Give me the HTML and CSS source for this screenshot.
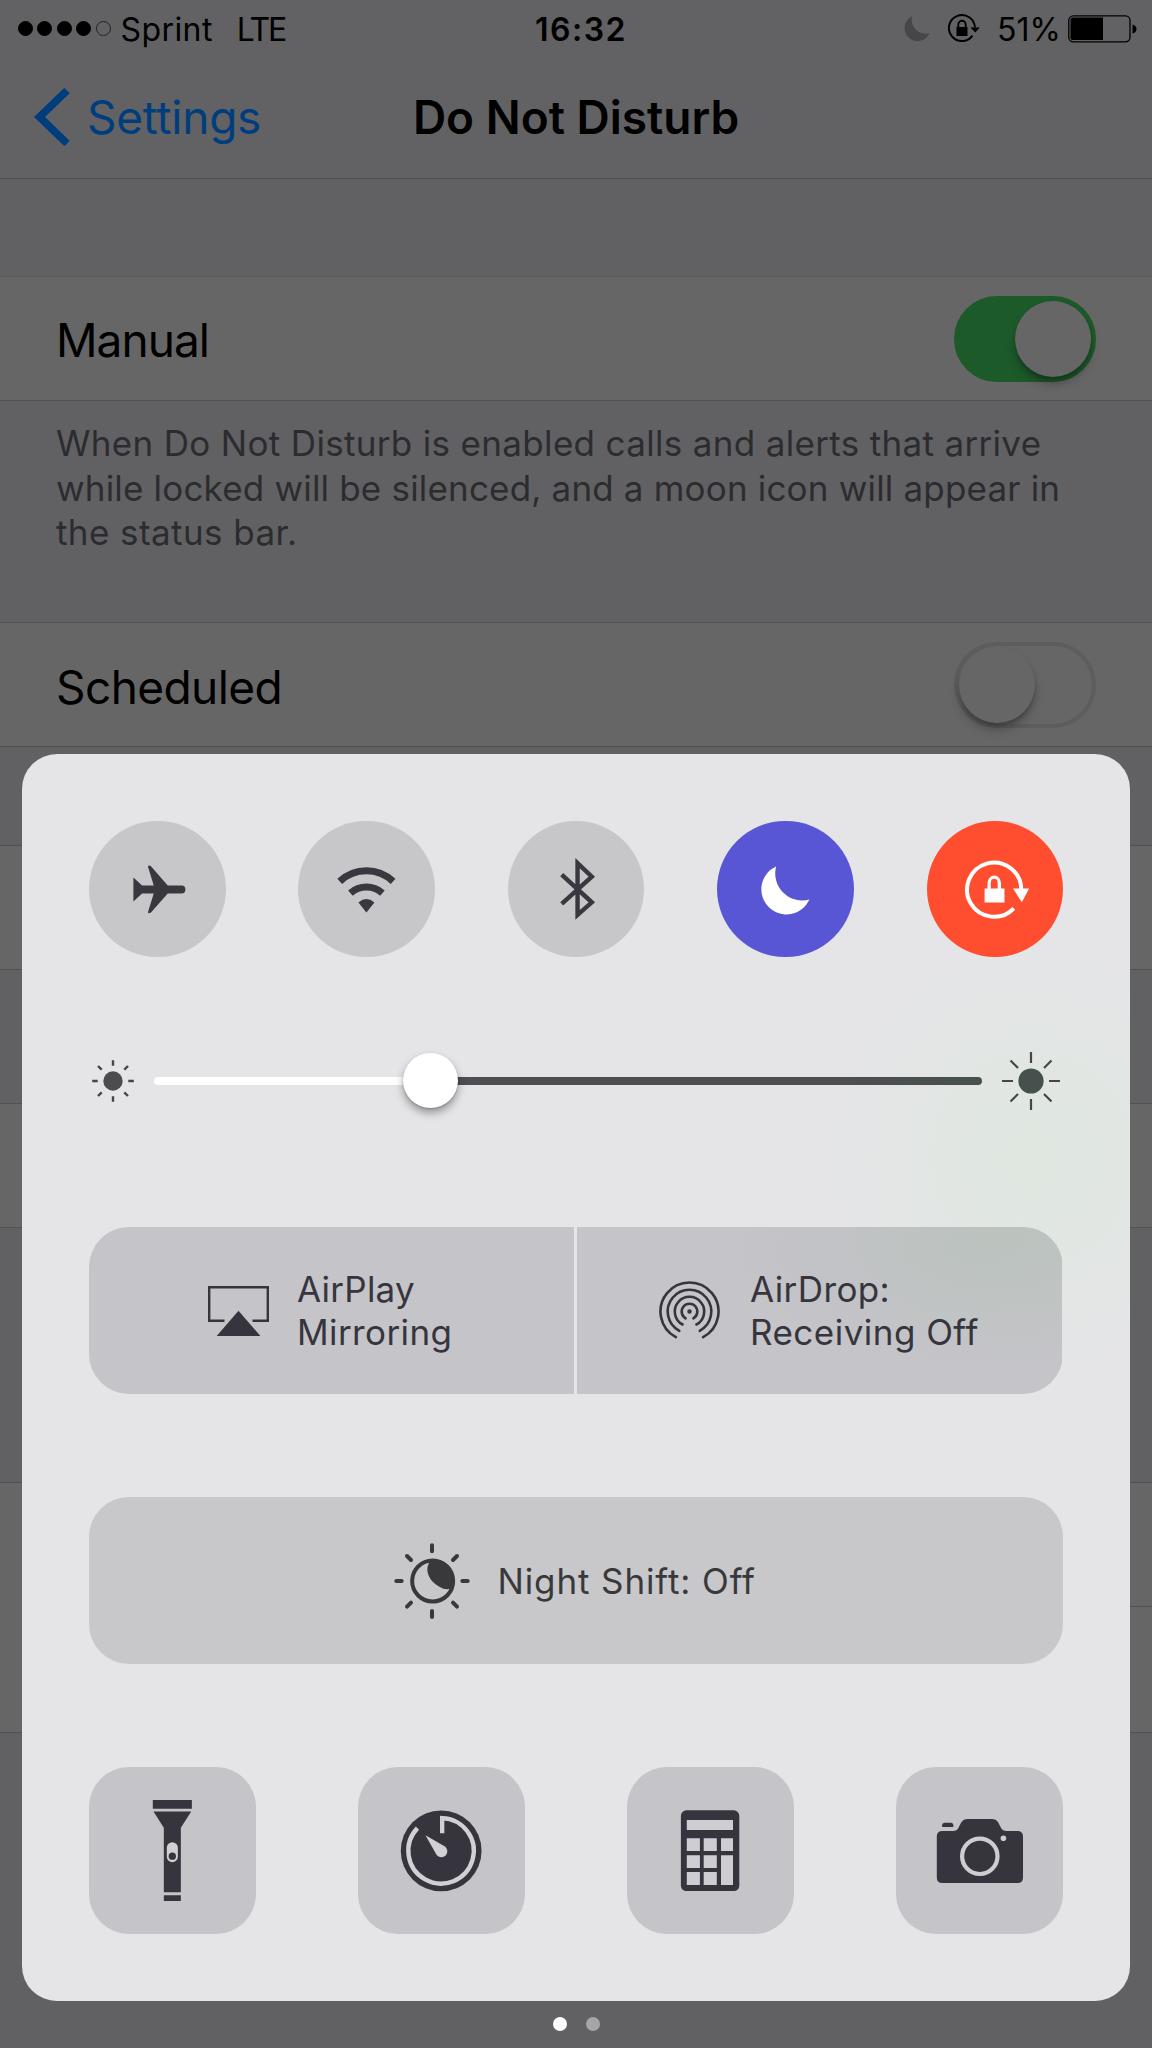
FILE: index.html
```html
<!DOCTYPE html>
<html lang="en">
<head>
<meta charset="utf-8">
<title>Do Not Disturb</title>
<link rel="stylesheet" href="styles.css">
</head>
<body>
<div class="screen">
  <header class="topbar">
    <div class="status">
      <div class="status-left">
        <span class="signal"><i class="on"></i><i class="on"></i><i class="on"></i><i class="on"></i><i></i></span>
        <span class="carrier">Sprint</span>
        <span class="network">LTE</span>
      </div>
      <span class="clock">16:32</span>
      <div class="status-right">
        <svg class="s-moon" viewBox="43 45 50 50"><path d="M58.9 45.3A25 25 0 1 0 92 78.3A27 27 0 0 1 58.9 45.3Z"/></svg>
        <svg class="s-lock" viewBox="0 0 32 30"><path d="M24.500 21.600A13 13 0 1 1 26.900 13.500" fill="none" stroke="#000" stroke-width="2"/><path d="M22.4 13.4h9.4l-4.5 5z"/><path d="M8.5 13h11v9h-11z"/><path d="M10.3 14V10.500a3.700 3.700 0 0 1 7.400 0V14" fill="none" stroke="#000" stroke-width="1.900"/></svg>
        <span class="percent">51%</span>
        <svg class="s-battery" viewBox="0 0 69 28"><rect x=".8" y=".8" width="61.200" height="26" rx="4.500" fill="none" stroke="#000" stroke-width="1.300"/><path d="M4.500 2.500H35V25H4.500a2 2 0 0 1-2-2V4.500a2 2 0 0 1 2-2Z"/><path d="M64.500 9.500Q68.500 10.500 68.500 14T64.500 18.500Z"/></svg>
      </div>
    </div>
    <nav class="nav">
      <a class="back"><svg viewBox="0 0 36 58"><path d="M33 2.500 5.500 29 33 55.500" fill="none" stroke="#003d7d" stroke-width="7.600"/></svg><span>Settings</span></a>
      <h1>Do Not Disturb</h1>
    </nav>
  </header>
  <section class="group group-manual">
    <div class="row"><span class="label-manual">Manual</span><span class="toggle toggle-on"><i></i></span></div>
  </section>
  <p class="note"><span class="n1">When Do Not Disturb is enabled calls and alerts that arrive</span><br><span class="n2">while locked will be silenced, and a moon icon will appear in</span><br><span class="n3">the status bar.</span></p>
  <section class="group group-scheduled">
    <div class="row"><span class="label-scheduled">Scheduled</span><span class="toggle"><i></i></span></div>
  </section>
  <section class="group group-a"><div class="row"></div></section>
  <section class="group group-b"><div class="row"></div></section>
  <section class="group group-c"><div class="row"></div><div class="row inset"></div></section>

  <main class="control-center">
    <div class="round-buttons">
      <button class="round"><svg viewBox="87 62 409 409"><path d="M220 231 246 255H281L264 200Q262 193 272 197L323 255H364A12 12 0 0 1 364 279H323L272 337Q262 341 264 334L281 279H246L220 303Z"/></svg></button>
      <button class="round"><svg viewBox="715 62 409 409"><g fill="none" stroke="#39383f" stroke-width="21"><path d="M840 243A116 116 0 0 1 1000 243"/><path d="M872 278A73 73 0 0 1 968 278"/></g><path d="M920 336 896 306Q920 286 944 306Z"/></svg></button>
      <button class="round"><svg viewBox="0 0 136 136"><path d="M53.500 53.500 83.500 81 69.300 93.500V42L83.500 55.500 53.500 82.500" fill="none" stroke="#39383f" stroke-width="4.400"/></svg></button>
      <button class="round dnd"><svg viewBox="0 0 136 136"><path d="M58.900 45.300A25 25 0 1 0 92 78.300A27 27 0 0 1 58.900 45.300Z" fill="#fff"/></svg></button>
      <button class="round lock"><svg viewBox="1 0 136 136"><g fill="none" stroke="#fff"><path d="M87.500 87A27 27 0 1 1 94.900 68" stroke-width="4"/><path d="M62.900 69V62a5.100 6 0 0 1 10.200 0V69" stroke-width="3.300"/></g><path d="M86.700 67.300H102.800L95.500 81ZM58.400 67.300H78.200V81.300H58.400Z" fill="#fff"/></svg></button>
    </div>

    <div class="brightness">
      <svg class="sun-small" viewBox="-21 -21 42 42"><circle r="9.700"/><g stroke-width="2.400"><path d="M0-20.800V-15.300M0 20.800V15.300M-20.800 0H-15.300M20.800 0H15.300M-15-15-11.300-11.300M15-15 11.300-11.300M-15 15-11.300 11.300M15 15 11.300 11.300"/></g></svg>
      <div class="track"><i class="thumb"></i></div>
      <svg class="sun-big" viewBox="-30 -30 60 60"><circle r="12.600"/><g stroke-width="2.200"><path d="M0-29V-18M0 29V18M-29 0H-18M29 0H18M-20.500-20.500-13-13M20.500-20.500 13-13M-20.500 20.500-13 13M20.500 20.500 13 13"/></g></svg>
    </div>

    <div class="air">
      <button class="air-half airplay">
        <svg viewBox="0 0 61 51"><path d="M16.500 34.800H1.200V1.200H59.800V34.800H44.500" fill="none" stroke="#36353d" stroke-width="2.400"/><path d="M30.500 24.700 52.400 50H8.700Z"/></svg>
        <span><b class="t-airplay">AirPlay</b><br><b class="t-mirroring">Mirroring</b></span>
      </button>
      <button class="air-half airdrop">
        <svg viewBox="-30.500 -30.500 61 61"><circle r="2.200"/><g fill="none" stroke="#36353d" stroke-width="2.600" stroke-linecap="round"><path d="M-13.600 25.600A29 29 0 1 1 13.600 25.600"/><path d="M-10.200 19.300A21.800 21.800 0 1 1 10.200 19.300"/><path d="M-6.900 13A14.700 14.700 0 1 1 6.900 13"/><path d="M-3.900 6.800A7.800 7.800 0 1 1 3.900 6.800"/></g></svg>
        <span><b class="t-airdrop">AirDrop:</b><br><b class="t-receiving">Receiving Off</b></span>
      </button>
    </div>

    <button class="night">
      <svg viewBox="161 188 228 228"><circle cx="277" cy="302" r="61.500" fill="none" stroke="#39393b" stroke-width="12"/><path d="M266 244A62 62 0 0 1 337 322Q325 329 309 325C276 313 256 284 262 258Q266 250 266 244Z"/><path d="M275 195V213M275 392V410M168 302H184M366 302H382M200 227 212 239M350 227 338 239M200 379 212 367M350 379 338 367" fill="none" stroke="#39393b" stroke-width="12" stroke-linecap="round"/></svg>
      <span>Night Shift: Off</span>
    </button>

    <div class="shortcuts">
      <button class="tile"><svg viewBox="88 81 500 500"><path d="M279 180H396V206H279ZM281 214H394L363 263V456H312V263ZM312 465H363V482H312Z"/><rect x="321" y="306" width="33" height="60" rx="16.500" fill="#d0d0d5"/><circle cx="337.500" cy="348" r="11"/></svg></button>
      <button class="tile"><svg viewBox="894 81 500 500"><circle cx="1143" cy="332" r="121"/><path d="M1072 264A98 98 0 1 0 1146 234V279" fill="none" stroke="#d0d0d5" stroke-width="13"/><path d="M1096 285 1153 318A18 18 0 1 1 1129 344Z" fill="#d0d0d5"/></svg></button>
      <button class="tile"><svg viewBox="0 0 167 167"><rect x="53.900" y="43.300" width="58.400" height="80.700" rx="5.500"/><path fill="#cdcdd2" d="M59.800 53H106V63H59.800ZM59.800 71.300h13.100V84H59.800ZM76.700 71.300h13.100V84H76.700ZM94 71.300h12V84H94ZM59.800 88.200h13.100V101H59.800ZM76.700 88.200h13.100V101H76.700ZM94 88.200h12V118H94ZM59.800 105h13.100V118H59.800ZM76.700 105h13.100V118H76.700Z"/></svg></button>
      <button class="tile"><svg viewBox="0 0 167 167"><path d="M46.100 60V58.500Q46.100 55.700 49 55.700H54.600Q57.400 55.700 57.400 58.500V60ZM46.500 64H57.500C65 64 62.500 52 71.500 52H96C105 52 102.500 64 110.500 64H121.500Q127 64 127 69.500V110.500Q127 116 121.500 116H46.500Q40.800 116 40.800 110.500V69.500Q40.800 64 46.500 64Z"/><circle cx="83.800" cy="89.300" r="17.700" fill="none" stroke="#cdcdd2" stroke-width="4.200"/><circle cx="107.400" cy="71.300" r="2.800" fill="#cdcdd2"/></svg></button>
    </div>
  </main>
  <div class="pager"><i class="current"></i><i></i></div>
</div>
</body>
</html>
```
FILE: styles.css
```css
* { box-sizing: border-box; }
body { margin: 0; background: #616163; font-family: Inter, "Liberation Sans", sans-serif; color: #000; }
svg { display: block; flex: none; }
span { white-space: nowrap; }
i { display: block; }
.screen { position: relative; width: 1152px; height: 2048px; overflow: hidden; background: #616163; }

/* Status bar and navigation */
.topbar { height: 179px; background: #626264; border-bottom: 1.500px solid #4c4c4f; }
.status { display: grid; grid-template-columns: 1fr auto 1fr; align-items: center; height: 59px; padding: 0 15px 0 18px; font-size: 32px; line-height: 38px; }
.status-left, .status-right { display: flex; align-items: center; }
.status-right { justify-content: flex-end; }
.signal { display: flex; gap: 4.400px; margin-right: 10px; margin-top: -3px; }
.signal i { width: 15px; height: 15px; border: 1.300px solid #222; border-radius: 50%; }
.signal .on { background: #000; border-color: #000; }
.carrier { margin-right: 24px; letter-spacing: .4px; }
.network { letter-spacing: -2.200px; }
.clock { padding-left: 7px; font-weight: 600; letter-spacing: 1.500px; }
.s-moon { width: 26px; height: 26px; margin-right: 18px; fill: #464648; }
.s-lock { width: 32px; height: 30px; margin-right: 17px; }
.s-moon, .s-lock, .s-battery { margin-top: -1px; }
.percent { margin-right: 7px; }
.s-battery { width: 69px; height: 28px; }
.nav { display: grid; grid-template-columns: 1fr auto 1fr; align-items: center; height: 116px; font-size: 46px; line-height: 56px; }
.back { display: flex; align-items: center; padding-left: 34px; color: #003d7d; letter-spacing: -.25px; }
.back svg { width: 36px; height: 58px; margin-right: 17px; }
h1 { margin: 0; font-size: 46px; font-weight: 600; white-space: nowrap; }

/* Settings list */
.group { background: #666; border-top: 1.500px solid #515153; border-bottom: 1.500px solid #515153; }
.row { display: flex; align-items: center; justify-content: space-between; height: 123px; padding: 0 56px 0 56px; font-size: 46px; line-height: 56px; }
.label-manual { margin-top: 3px; letter-spacing: -.95px; }
.label-scheduled { margin-top: 4px; letter-spacing: -.58px; }
.group-manual { margin-top: 97px; border-top-color: #5a5a5b; }
.note { height: 221px; margin: 0; padding: 20px 56px 0; color: #2c2c2f; font-size: 35px; line-height: 44.500px; }
.n1 { letter-spacing: .33px; }
.n2 { letter-spacing: .18px; }
.n3 { letter-spacing: .42px; }
.group-a { margin-top: 98px; }
.group-b { margin-top: 133px; }
.group-c { margin-top: 254px; }
.inset { height: 126px; margin-left: 56px; border-top: 1px solid #515153; }
.toggle { display: flex; justify-content: flex-start; width: 142px; height: 86px; padding: 1px; border: 4px solid #5d5d5e; border-radius: 43px; }
.toggle i { width: 76px; height: 76px; border-radius: 50%; background: #666; box-shadow: 0 7px 10px rgba(0,0,0,.25), 0 3px 3px rgba(0,0,0,.15); }
.toggle-on { justify-content: flex-end; border-color: #1d5a2a; background: #1d5a2a; }

/* Control centre sheet */
.control-center { position: absolute; left: 22px; top: 753.500px; width: 1108px; height: 1247px; padding: 67px 67px 0; border-radius: 35px; overflow: hidden; background: radial-gradient(ellipse 210px 220px at 1010px 405px, #dfe7e0 0, rgba(223,231,224,.55) 50%, rgba(223,231,224,0) 100%), #e5e5e8; }
button { padding: 0; border: 0; font: inherit; color: inherit; }
.round-buttons { display: flex; justify-content: space-between; height: 137px; }
.round { width: 136.500px; height: 136.500px; border-radius: 50%; background: #c7c7ca; fill: #39383f; }
.round svg { width: 136.500px; height: 136.500px; }
.dnd { background: #5956d6; }
.lock { background: #ff4e2f; }
.brightness { display: flex; align-items: center; height: 60px; margin-top: 93px; padding: 0 2px; }
.sun-small { width: 42px; height: 42px; margin: 0 20px 0 .500px; fill: #4c4c50; stroke: none; }
.sun-small g, .sun-big g { stroke: #45464a; }
.track { display: flex; align-items: center; width: 829px; height: 8px; padding-left: 249px; border-radius: 4px; background: linear-gradient(90deg, #fff 277px, #4d4d52 277px, #4d4d52 700px, #46524d 829px); }
.thumb { width: 55.500px; height: 55.500px; border-radius: 50%; background: #fff; box-shadow: 0 5px 8px rgba(0,0,0,.35), 0 1px 2px rgba(0,0,0,.2); }
.sun-big { width: 60px; height: 60px; margin-left: 19.500px; fill: #46504c; }
.air { display: grid; grid-template-columns: 485px 485px; gap: 3px; height: 167px; margin-top: 116.500px; border-radius: 40px; overflow: hidden; color: #36353d; fill: #36353d; font-size: 35px; line-height: 42.700px; }
.air-half { display: flex; align-items: center; text-align: left; background: rgba(5,3,16,.14); }
.air-half b { font-weight: 430; }
.t-airplay { letter-spacing: .25px; }
.t-mirroring { letter-spacing: .4px; }
.t-airdrop { letter-spacing: .4px; }
.t-receiving { letter-spacing: .47px; }
.airplay { padding-left: 119px; }
.airplay svg { width: 61px; height: 51px; margin-top: 1px; margin-right: 28px; }
.airdrop { padding-left: 82px; background: radial-gradient(ellipse 260px 120px at 405px 20px, rgba(160,185,168,.22), rgba(160,185,168,0)), rgba(5,3,16,.14); }
.airdrop svg { width: 61px; height: 61px; margin-top: 1px; margin-right: 30px; }
.night { display: flex; align-items: center; width: 974px; height: 167px; margin-top: 103px; padding-left: 305px; border-radius: 40px; background: #c8c8ca; color: #39393b; fill: #39393b; font-size: 35px; font-weight: 430; letter-spacing: .88px; }
.night svg { width: 76px; height: 76px; margin-right: 27.500px; }
.shortcuts { display: flex; justify-content: space-between; margin-top: 103px; }
.tile { width: 167px; height: 167px; border-radius: 40px; background: #c4c4c9; fill: #36353d; }
.tile svg { width: 167px; height: 167px; }

.pager { position: absolute; left: 0; top: 2017px; display: flex; justify-content: center; gap: 19.500px; width: 1153px; }
.pager i { width: 14px; height: 14px; border-radius: 50%; background: #a5a5a6; }
.pager .current { background: #fff; }
```
